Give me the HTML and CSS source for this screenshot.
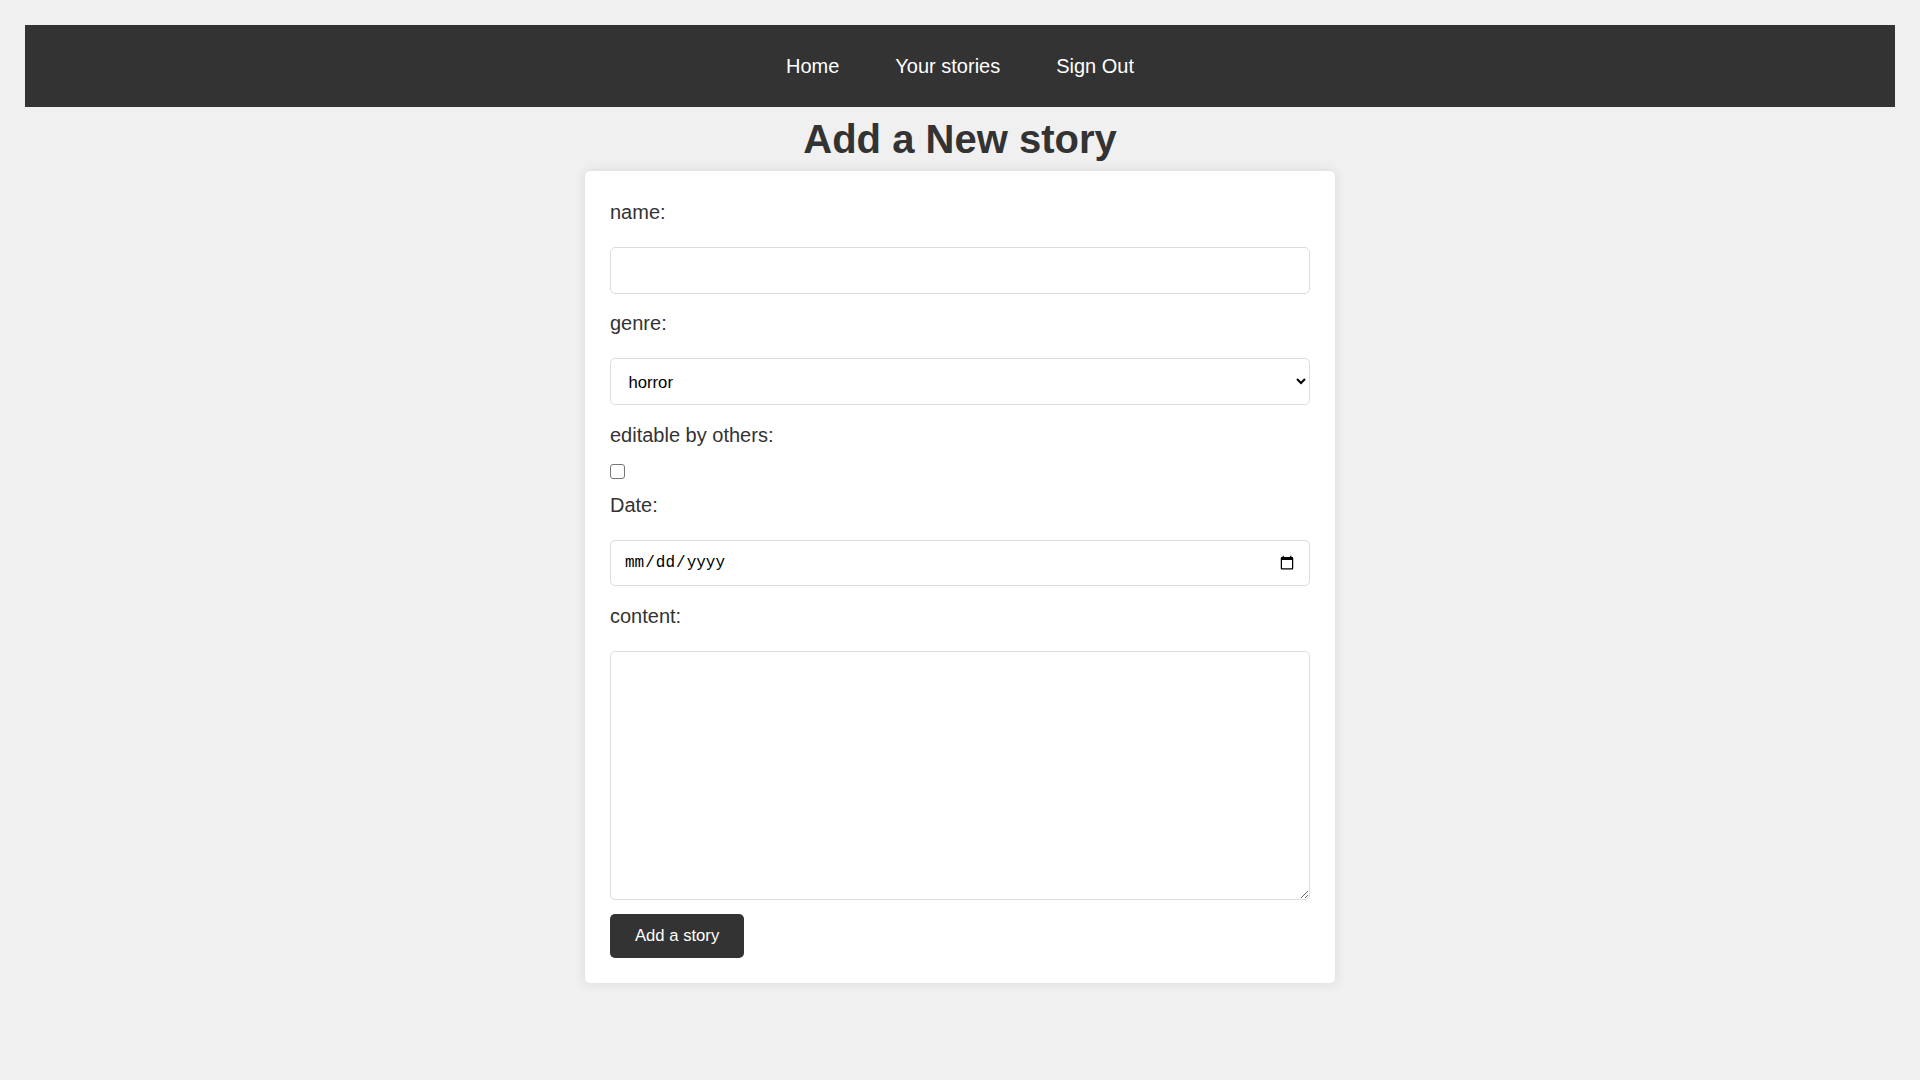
FILE: index.html
```html
<!DOCTYPE html>
<html lang="en">
<head>
<meta charset="utf-8">
<title>Add a New story</title>
<link rel="stylesheet" href="styles.css">
</head>
<body>
<nav class="topnav">
  <a class="nav-link" href="#">Home</a>
  <a class="nav-link" href="#">Your stories</a>
  <a class="nav-link" href="#">Sign Out</a>
</nav>
<h1 class="page-title">Add a New story</h1>
<form class="story-form">
  <label class="field-label" for="name">name:</label>
  <input class="control" type="text" id="name">
  <label class="field-label" for="genre">genre:</label>
  <select class="control control-select" id="genre">
    <option>horror</option>
    <option>comedy</option>
    <option>drama</option>
  </select>
  <label class="field-label" for="editable">editable by others:</label>
  <input class="checkbox" type="checkbox" id="editable">
  <label class="field-label" for="date">Date:</label>
  <input class="control control-date" type="date" id="date">
  <label class="field-label" for="content">content:</label>
  <textarea class="control control-area" id="content"></textarea>
  <button class="submit-btn" type="button">Add a story</button>
</form>
</body>
</html>
```
FILE: styles.css
```css
html, body {
  margin: 0;
  padding: 0;
}
body {
  background: #f0f0f0;
  font-family: "Liberation Sans", Arial, sans-serif;
  color: #333;
  line-height: 1.6;
  padding: 25px;
}
.topnav {
  background: #333;
  height: 82px;
  display: flex;
  justify-content: center;
  align-items: center;
  gap: 56px;
}
.nav-link {
  color: #fff;
  text-decoration: none;
  font-size: 20px;
  line-height: 23px;
}
.page-title {
  margin: 0;
  text-align: center;
  font-size: 40px;
  line-height: 64px;
  font-weight: bold;
  color: #333;
}
.story-form {
  width: 700px;
  margin: 0 auto;
  background: #fff;
  padding: 25px;
  border-radius: 5px;
  box-shadow: 0 0 12px rgba(0, 0, 0, 0.1);
  display: flex;
  flex-direction: column;
  align-items: flex-start;
}
.field-label {
  font-size: 20px;
  line-height: 32px;
  margin-bottom: 6.5px;
  color: #333;
}
.control {
  box-sizing: border-box;
  width: 100%;
  height: 46.5px;
  margin: 12.5px 0 13.5px;
  padding: 12.5px;
  border: 1px solid #ddd;
  border-radius: 5px;
  background: #fff;
  font-family: "Liberation Sans", Arial, sans-serif;
  font-size: 16.67px;
  color: #000;
  line-height: normal;
}
.control-select {
  height: 47px;
  padding-left: 13.5px;
}
.control-date {
  font-family: "Liberation Mono", "Courier New", monospace;
  font-size: 16px;
  padding-left: 13px;
}
.control-area {
  height: 249.5px;
  resize: vertical;
}
.checkbox {
  appearance: none;
  -webkit-appearance: none;
  box-sizing: border-box;
  width: 15px;
  height: 15px;
  margin: 7px 0 9.5px;
  border: 1.3px solid #767676;
  border-radius: 3px;
  background: #fff;
}
.submit-btn {
  height: 44.5px;
  padding: 0 25px;
  border: none;
  border-radius: 5px;
  background: #333;
  color: #fff;
  font-family: "Liberation Sans", Arial, sans-serif;
  font-size: 16.67px;
  line-height: 19px;
  cursor: pointer;
}
```
